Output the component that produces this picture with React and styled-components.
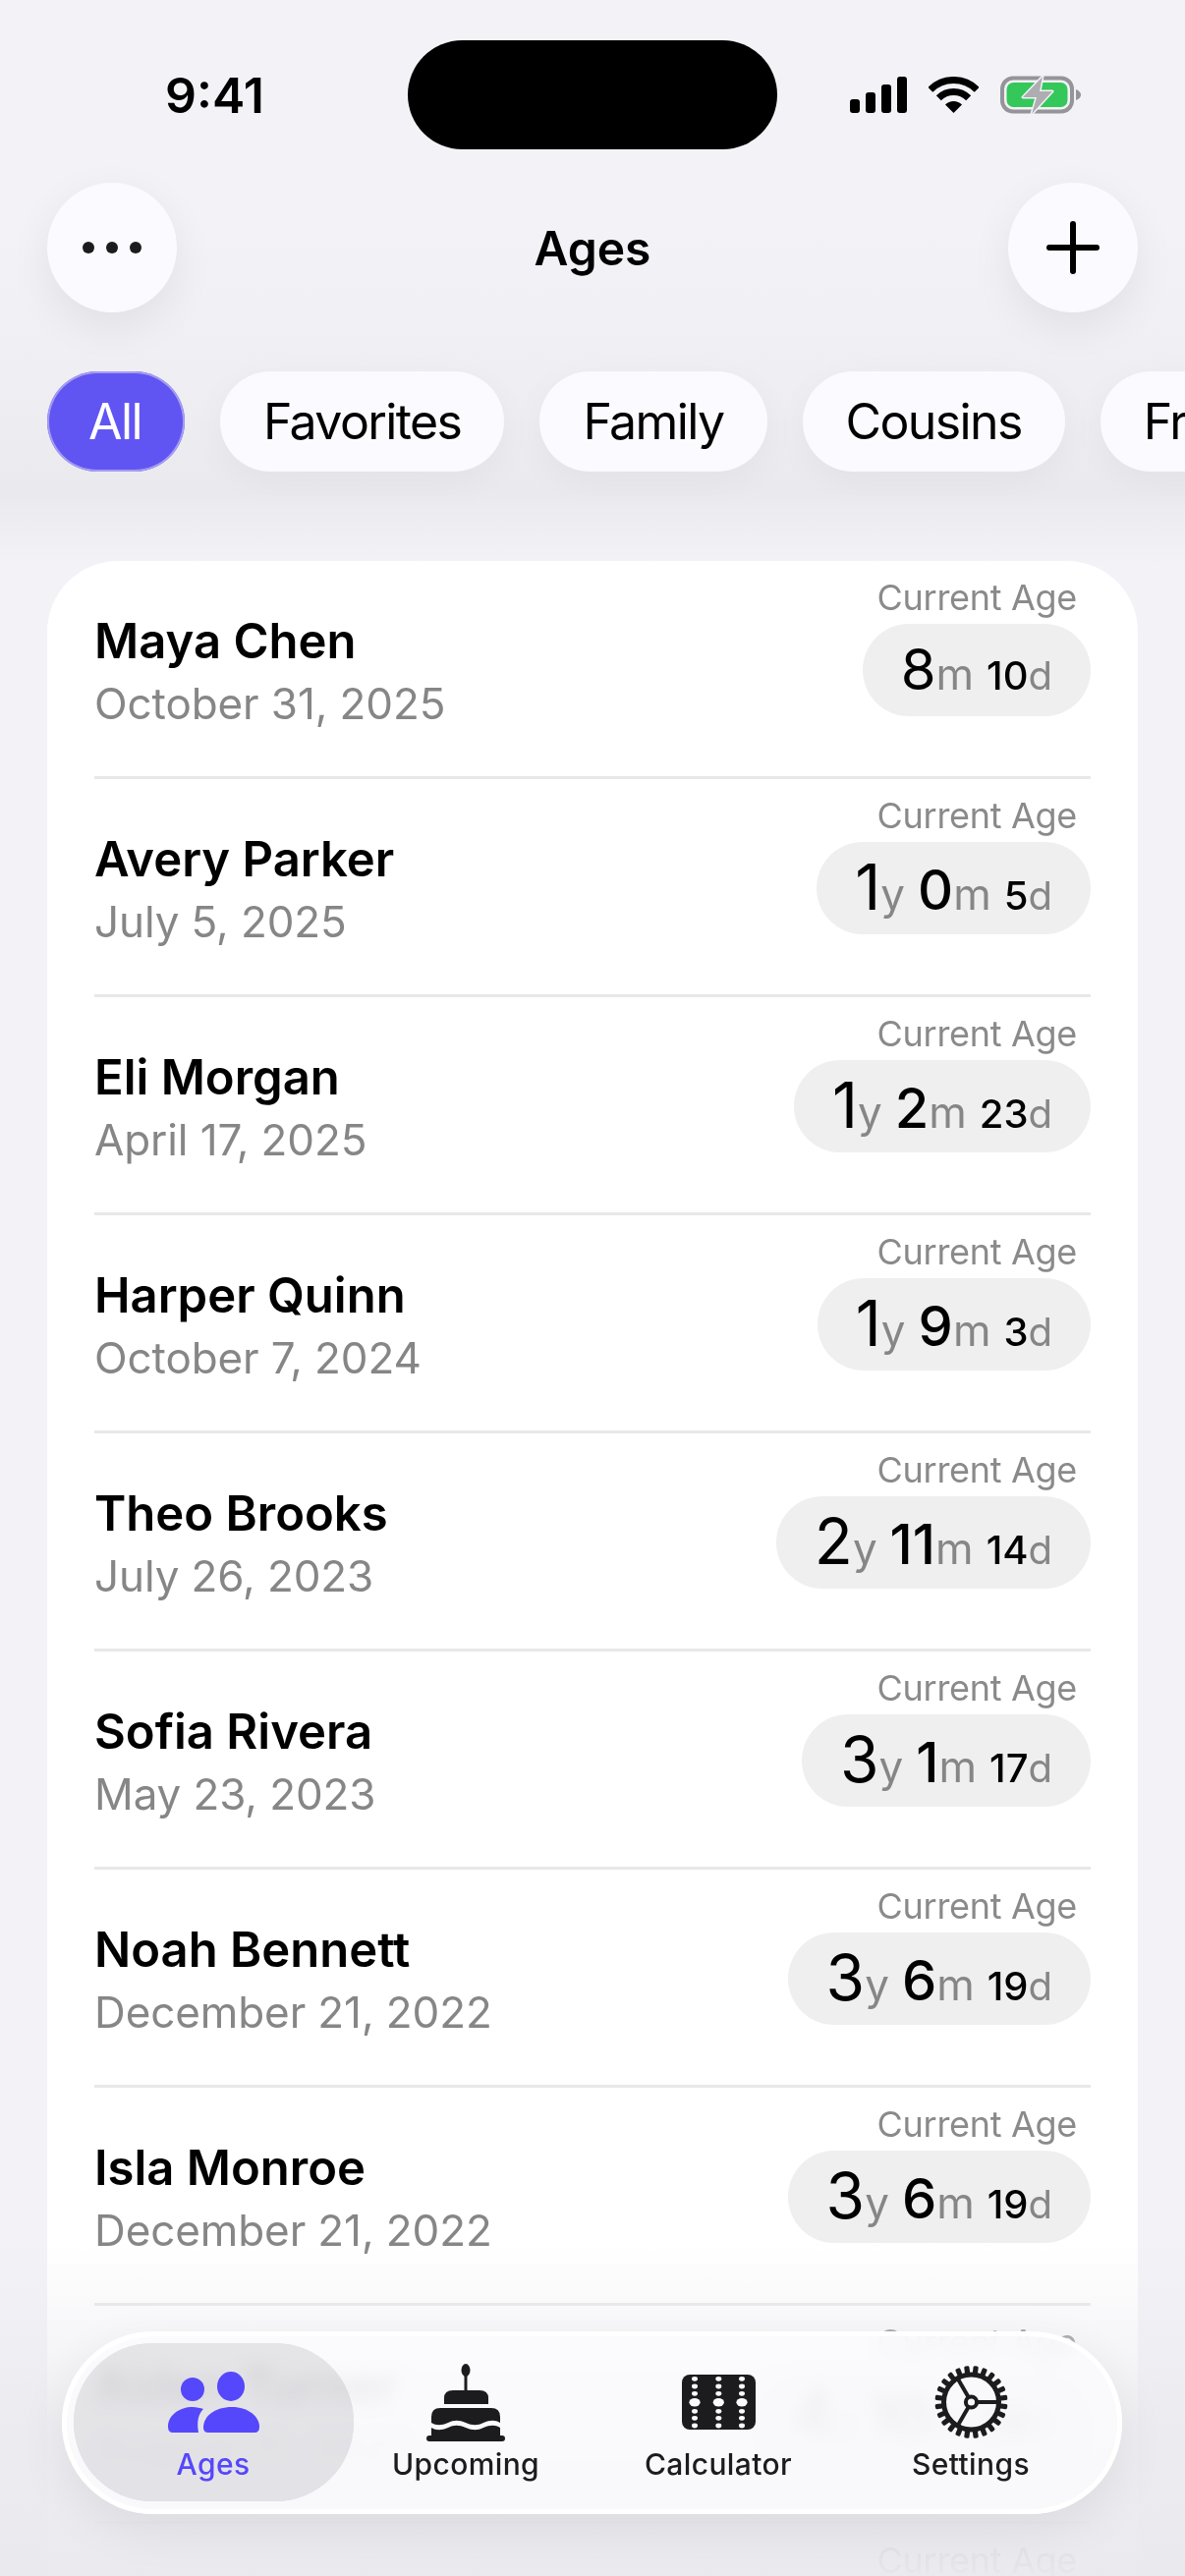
import React from 'react';
import styled, { createGlobalStyle } from 'styled-components';

const people = [
  { name: 'Maya Chen', born: 'October 31, 2025', age: { m: 8, d: 10 } },
  { name: 'Avery Parker', born: 'July 5, 2025', age: { y: 1, m: 0, d: 5 } },
  { name: 'Eli Morgan', born: 'April 17, 2025', age: { y: 1, m: 2, d: 23 } },
  { name: 'Harper Quinn', born: 'October 7, 2024', age: { y: 1, m: 9, d: 3 } },
  { name: 'Theo Brooks', born: 'July 26, 2023', age: { y: 2, m: 11, d: 14 } },
  { name: 'Sofia Rivera', born: 'May 23, 2023', age: { y: 3, m: 1, d: 17 } },
  { name: 'Noah Bennett', born: 'December 21, 2022', age: { y: 3, m: 6, d: 19 } },
  { name: 'Isla Monroe', born: 'December 21, 2022', age: { y: 3, m: 6, d: 19 } },
  { name: 'Aiden Turner', born: 'August 11, 2021', age: { y: 4, m: 10, d: 29 } },
  { name: 'Lucas Hayes', born: 'June 2, 2021', age: { y: 5, m: 1, d: 8 } },
];

const filters = ['All', 'Favorites', 'Family', 'Cousins', 'Friends'];

function PeopleIcon() {
  return (
    <svg width="93" height="62" viewBox="0 0 93 62" fill="#5547fb">
      <circle cx="25" cy="18" r="12" />
      <ellipse cx="64" cy="15" rx="14" ry="15" />
      <path d="M0 56C0 44 12 36 25 36C29 36 33 37 36 38C31 43 29 50 31 62L5 62Q0 62 0 56Z" />
      <path d="M36 57C36 45 48 36 65 36C82 36 93 46 93 56Q93 62 88 62L41 62Q36 62 36 57Z" />
    </svg>
  );
}

function CakeIcon() {
  return (
    <svg width="80" height="79" viewBox="0 0 80 79" fill="#1c1c1e">
      <ellipse cx="40" cy="6.5" rx="4.5" ry="6.5" />
      <rect x="38.5" y="12" width="3" height="16" />
      <path d="M18 41V35Q18 27 27 27H54Q63 27 63 35V41Z" />
      <path d="M5 60V54Q5 45 14 45H66Q75 45 75 54V60C70 57 65 57 58 60C52 63 47 63 40 60C33 57 28 57 22 60C15 63 10 63 5 60Z" />
      <path d="M5 73V65C10 68 15 68 22 65C28 62 33 62 40 65C47 68 52 68 58 65C65 62 70 62 75 65V73Z" />
      <rect x="0" y="73" width="80" height="6" rx="3" />
    </svg>
  );
}

function CalculatorIcon() {
  const rows = [4.3, 12, 19.3, 37.3, 44.3, 52];
  const cols = [13, 37.3, 61];
  return (
    <svg width="75" height="56" viewBox="0 0 75 56">
      <rect width="75" height="56" rx="8" fill="#1c1c1e" />
      {cols.map((x) => (
        <g key={x} fill="#fbfbfe">
          {rows.map((y) => (
            <ellipse key={y} cx={x} cy={y} rx="3" ry="2.4" />
          ))}
          <ellipse cx={x} cy="28.3" rx="5.6" ry="4.2" />
        </g>
      ))}
    </svg>
  );
}

function SettingsIcon() {
  const teeth = Array.from({ length: 24 }, (_, i) => i * 15);
  return (
    <svg width="75" height="74" viewBox="0 0 75 74" fill="none" stroke="#1c1c1e">
      <g transform="translate(37.5 37)">
        {teeth.map((a) => (
          <rect key={a} x="-2.6" y="-37" width="5.2" height="8" rx="1.6" fill="#1c1c1e" stroke="none" transform={`rotate(${a + 7.5})`} />
        ))}
        <circle r="28" strokeWidth="5" />
        <circle r="5.6" strokeWidth="4" />
        <path d="M6 0H28M-3 -5.2L-14 -24.2M-3 5.2L-14 24.2" strokeWidth="4" />
      </g>
    </svg>
  );
}

function StatusIcons() {
  return (
    <StatusGroup>
      <svg width="58" height="37" viewBox="0 0 58 37" fill="#000">
        <rect x="0" y="23" width="10" height="14" rx="3" />
        <rect x="16" y="16" width="10" height="21" rx="3" />
        <rect x="32" y="8" width="10" height="29" rx="3" />
        <rect x="48" y="0" width="10" height="37" rx="3" />
      </svg>
      <svg width="51" height="37" viewBox="0 0 51 37" fill="none" stroke="#000" strokeWidth="7">
        <path d="M1.8 13.3A33.5 33.5 0 0 1 49.2 13.3" />
        <path d="M10.3 21.8A21.5 21.5 0 0 1 40.7 21.8" />
        <path d="M25.5 37L17 28.5A12 12 0 0 1 34 28.5Z" fill="#000" stroke="none" />
      </svg>
      <svg width="82" height="39" viewBox="0 0 82 39">
        <rect x="2" y="2.5" width="71" height="34" rx="11" fill="none" stroke="#959599" strokeWidth="4" />
        <rect x="6.5" y="7" width="62" height="25" rx="7" fill="#34c759" />
        <path d="M77 14Q82 16 82 19.5Q82 23 77 25Z" fill="#959599" />
        <path d="M43 1L23 22H37L32 39L53 16H40Z" fill="#aeaeb2" stroke="#f2f2f7" strokeWidth="3" paintOrder="stroke" strokeLinejoin="round" />
      </svg>
    </StatusGroup>
  );
}

function Age({ age }) {
  const hasYears = age.y !== undefined;
  return (
    <AgePill>
      {hasYears && (
        <AgePart>
          <AgeNum $size={64}>{age.y}</AgeNum>
          <AgeUnit $size={44}>y</AgeUnit>
        </AgePart>
      )}
      <AgePart>
        <AgeNum $size={hasYears ? 56 : 58} $weight={hasYears ? 500 : 400}>{age.m}</AgeNum>
        <AgeUnit $size={44}>m</AgeUnit>
      </AgePart>
      <AgePart>
        <AgeNum $size={40} $weight={500}>{age.d}</AgeNum>
        <AgeUnit $size={40}>d</AgeUnit>
      </AgePart>
    </AgePill>
  );
}

export default function App() {
  return (
    <Screen>
      <GlobalStyle />
      <StatusBar>
        <Time>9:41</Time>
        <Island />
        <StatusIcons />
      </StatusBar>

      <Header>
        <RoundButton>
          <svg width="62" height="12" viewBox="0 0 62 12" fill="#1c1c1e">
            <circle cx="7" cy="6" r="6" />
            <circle cx="31" cy="6" r="6" />
            <circle cx="55" cy="6" r="6" />
          </svg>
        </RoundButton>
        <Title>Ages</Title>
        <RoundButton>
          <svg width="54" height="54" viewBox="0 0 54 54" fill="none" stroke="#000" strokeWidth="6" strokeLinecap="round">
            <path d="M27 3V51M3 27H51" />
          </svg>
        </RoundButton>
      </Header>

      <Chips>
        {filters.map((f, i) => (
          <Chip key={f} $active={i === 0}>{f}</Chip>
        ))}
      </Chips>

      <Card>
        {people.map((p) => (
          <Row key={p.name}>
            <Who>
              <Name>{p.name}</Name>
              <Born>{p.born}</Born>
            </Who>
            <AgeCol>
              <AgeLabel>Current Age</AgeLabel>
              <Age age={p.age} />
            </AgeCol>
          </Row>
        ))}
      </Card>

      <BottomFade />

      <TabBar>
        <Tab $active>
          <TabIcon><PeopleIcon /></TabIcon>
          <TabLabel $active>Ages</TabLabel>
        </Tab>
        <Tab>
          <TabIcon><CakeIcon /></TabIcon>
          <TabLabel>Upcoming</TabLabel>
        </Tab>
        <Tab>
          <TabIcon><CalculatorIcon /></TabIcon>
          <TabLabel>Calculator</TabLabel>
        </Tab>
        <Tab>
          <TabIcon><SettingsIcon /></TabIcon>
          <TabLabel>Settings</TabLabel>
        </Tab>
      </TabBar>
    </Screen>
  );
}

const GlobalStyle = createGlobalStyle`
  html, body {
    margin: 0;
    padding: 0;
    background: #f2f2f7;
  }
  * {
    box-sizing: border-box;
  }
`;

const Screen = styled.div`
  position: relative;
  width: 1206px;
  height: 2622px;
  overflow: hidden;
  font-family: Inter, "Noto Sans", sans-serif;
  color: #000;
  background: linear-gradient(#f3f2f7 0, #f2f2f7 240px, #eeedf2 420px, #eaeaee 500px, #f2f2f7 575px, #f2f2f7 100%);
`;

const StatusBar = styled.div`
  display: grid;
  grid-template-columns: 415px 376px 1fr;
  align-items: center;
  height: 111px;
  margin-top: 41px;
`;

const Time = styled.div`
  padding-left: 168px;
  font-size: 50px;
  font-weight: 600;
`;

const Island = styled.div`
  height: 111px;
  border-radius: 56px;
  background: #000;
`;

const StatusGroup = styled.div`
  display: flex;
  align-items: center;
  gap: 22px;
  padding-left: 74px;
`;

const Header = styled.div`
  display: flex;
  align-items: center;
  justify-content: space-between;
  margin-top: 34px;
  padding: 0 48px;
`;

const RoundButton = styled.div`
  display: flex;
  align-items: center;
  justify-content: center;
  width: 132px;
  height: 132px;
  border-radius: 50%;
  background: #fbfafe;
  box-shadow: 0 14px 44px rgba(0, 0, 0, 0.07);
`;

const Title = styled.div`
  font-size: 48px;
  font-weight: 600;
`;

const Chips = styled.div`
  display: flex;
  gap: 36px;
  margin-top: 60px;
  padding-left: 48px;
  white-space: nowrap;
`;

const Chip = styled.div`
  display: flex;
  align-items: center;
  flex: none;
  height: 102px;
  padding: 0 44px 0 ${(p) => (p.$active ? 42 : 44)}px;
  border-radius: 51px;
  font-size: 50px;
  letter-spacing: -1.6px;
  color: ${(p) => (p.$active ? '#fff' : '#000')};
  background: ${(p) => (p.$active ? '#6055f2' : '#fbfafe')};
  box-shadow: ${(p) => (p.$active ? 'inset 0 0 0 2px #a49df0' : '0 10px 36px rgba(0, 0, 0, 0.04)')};
`;

const Card = styled.div`
  margin: 91px 48px 0;
  padding: 0 48px;
  border-radius: 72px 72px 0 0;
  background: #fff;
`;

const Row = styled.div`
  display: flex;
  justify-content: space-between;
  align-items: center;
  height: 222px;
  border-bottom: 3px solid #e8e8e9;
`;

const Who = styled.div`
  display: flex;
  flex-direction: column;
  gap: 5px;
  padding-top: 5px;
`;

const Name = styled.div`
  font-size: 49px;
  font-weight: 600;
  line-height: 60px;
`;

const Born = styled.div`
  font-size: 44px;
  line-height: 56px;
  letter-spacing: -0.1px;
  color: #868686;
`;

const AgeCol = styled.div`
  display: flex;
  flex-direction: column;
  align-items: flex-end;
  align-self: flex-start;
  gap: 3px;
  padding-top: 13px;
`;

const AgeLabel = styled.div`
  padding-right: 14px;
  font-size: 36px;
  line-height: 48px;
  letter-spacing: -0.3px;
  color: #8a8a8a;
`;

const AgePill = styled.div`
  display: flex;
  align-items: baseline;
  gap: 13px;
  height: 94px;
  padding: 0 39px;
  line-height: 92px;
  border-radius: 47px;
  background: #efefef;
`;

const AgePart = styled.span`
  display: inline-flex;
  align-items: baseline;
`;

const AgeNum = styled.span`
  font-size: ${(p) => p.$size}px;
  font-weight: ${(p) => p.$weight || 400};
`;

const AgeUnit = styled.span`
  font-size: ${(p) => p.$size}px;
  color: #868686;
`;

const BottomFade = styled.div`
  position: absolute;
  left: 0;
  right: 0;
  bottom: 0;
  height: 340px;
  background: linear-gradient(rgba(233, 233, 238, 0), rgba(233, 233, 238, 0.75) 55%, rgba(233, 233, 238, 0.97));
  pointer-events: none;
`;

const TabBar = styled.div`
  position: absolute;
  left: 63px;
  top: 2373px;
  display: grid;
  grid-template-columns: repeat(4, 257px);
  width: 1079px;
  height: 186px;
  padding: 12px 25.5px 13px;
  border-radius: 93px;
  box-shadow: 0 16px 50px rgba(0, 0, 0, 0.07);

  &::before {
    content: '';
    position: absolute;
    inset: 0;
    border-radius: 93px;
    background: rgba(251, 251, 254, 0.84);
    box-shadow: inset 0 0 0 5px rgba(255, 255, 255, 0.9);
    backdrop-filter: blur(9px);
  }
`;

const Tab = styled.div`
  position: relative;
  display: flex;
  flex-direction: column;
  align-items: center;
  justify-self: center;
  gap: 3px;
  width: ${(p) => (p.$active ? '285px' : '257px')};
  height: 161px;
  padding-top: 20px;
  border-radius: 80px;
  background: ${(p) => (p.$active ? 'rgba(245, 245, 248, 0.5)' : 'transparent')};
  backdrop-filter: ${(p) => (p.$active ? 'brightness(0.62) contrast(3)' : 'none')};
`;

const TabIcon = styled.div`
  display: flex;
  align-items: center;
  justify-content: center;
  height: 80px;
`;

const TabLabel = styled.div`
  font-size: 30px;
  font-weight: 500;
  line-height: 40px;
  letter-spacing: 0.4px;
  color: ${(p) => (p.$active ? '#5547fb' : '#1c1c1e')};
`;
